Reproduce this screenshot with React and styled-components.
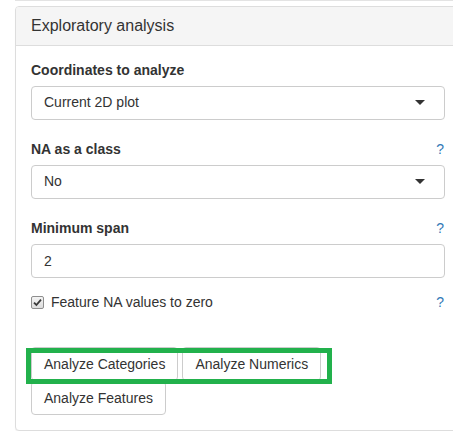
import { styled, createGlobalStyle } from "styled-components";

const GlobalStyle = createGlobalStyle`
  html, body {
    margin: 0;
    padding: 0;
    background: #fff;
    overflow: hidden;
  }
  body {
    font-family: "Liberation Sans", Arial, sans-serif;
    font-size: 14px;
    line-height: 1.42857;
    color: #333;
  }
  * { box-sizing: border-box; }
`;

const fields = [
  { label: "Coordinates to analyze", kind: "select", value: "Current 2D plot", help: false },
  { label: "NA as a class", kind: "select", value: "No", help: true },
  { label: "Minimum span", kind: "input", value: "2", help: true },
];

export default function App() {
  return (
    <>
      <GlobalStyle />
      <PrevPanelEdge />
      <Panel>
        <PanelHeading>Exploratory analysis</PanelHeading>
        <PanelBody>
          {fields.map((f) => (
            <FormGroup key={f.label}>
              <LabelRow>
                <Label>{f.label}</Label>
                {f.help && <Help>?</Help>}
              </LabelRow>
              {f.kind === "select" ? (
                <SelectBox>
                  <span>{f.value}</span>
                  <Caret />
                </SelectBox>
              ) : (
                <TextInput defaultValue={f.value} />
              )}
            </FormGroup>
          ))}

          <CheckRow>
            <CheckLabel>
              <CheckBox>
                <svg width="9" height="9" viewBox="0 0 9 9">
                  <path d="M1 4.6 L3.4 7 L8 1.6" fill="none" stroke="#3a3a3a" strokeWidth="1.8" />
                </svg>
              </CheckBox>
              Feature NA values to zero
            </CheckLabel>
            <Help>?</Help>
          </CheckRow>

          <ButtonArea>
            <Button>Analyze Categories</Button>
            <Button>Analyze Numerics</Button>
            <Button>Analyze Features</Button>
            <Highlight />
          </ButtonArea>
        </PanelBody>
      </Panel>
    </>
  );
}

const PrevPanelEdge = styled.div`
  height: 1px;
  margin: 0 0 5px 15px;
  border-bottom: 1px solid #e3e3e3;
`;

const Panel = styled.div`
  margin-left: 15px;
  width: 446px;
  border: 1px solid #ddd;
  border-radius: 4px;
  background: #fff;
  box-shadow: 0 1px 1px rgba(0, 0, 0, 0.05);
`;

const PanelHeading = styled.div`
  padding: 10px 15px;
  background: #f5f5f5;
  border-bottom: 1px solid #ddd;
  border-radius: 3px 3px 0 0;
  font-size: 16px;
  line-height: 1.1;
  color: #333;
`;

const PanelBody = styled.div`
  padding: 15px;
`;

const FormGroup = styled.div`
  margin-bottom: 20px;
`;

const LabelRow = styled.div`
  display: flex;
  justify-content: space-between;
  align-items: center;
  margin-bottom: 5px;
  height: 20px;
`;

const Label = styled.label`
  font-weight: bold;
`;

const Help = styled.span`
  color: #337ab7;
  font-size: 14px;
  padding-right: 1px;
`;

const SelectBox = styled.div`
  display: flex;
  align-items: center;
  justify-content: space-between;
  height: 34px;
  padding: 6px 19px 6px 12px;
  border: 1px solid #ccc;
  border-radius: 4px;
  background: #fff;
  color: #333;
`;

const Caret = styled.span`
  width: 0;
  height: 0;
  border-left: 5px solid transparent;
  border-right: 5px solid transparent;
  border-top: 5px solid #333;
`;

const TextInput = styled.input`
  display: block;
  width: 100%;
  height: 34px;
  padding: 6px 12px;
  border: 1px solid #ccc;
  border-radius: 4px;
  font: inherit;
  color: #333;
  outline: none;
`;

const CheckRow = styled.div`
  display: flex;
  justify-content: space-between;
  align-items: center;
  height: 20px;
  margin-top: -5px;
`;

const CheckLabel = styled.label`
  display: flex;
  align-items: center;
  font-weight: normal;
`;

const CheckBox = styled.span`
  display: inline-flex;
  align-items: center;
  justify-content: center;
  width: 13px;
  height: 13px;
  margin-right: 7px;
  border: 1px solid #8e8e8e;
  border-radius: 2px;
  background: linear-gradient(#f4f4f4, #dcdcdc);
`;

const ButtonArea = styled.div`
  position: relative;
  display: flex;
  flex-wrap: wrap;
  column-gap: 4px;
  margin-top: 34px;
`;

const Button = styled.button`
  height: 34px;
  padding: 6px 12px;
  border: 1px solid #ccc;
  border-radius: 4px;
  background: #fff;
  color: #333;
  font: inherit;
  line-height: 20px;
  cursor: pointer;
`;

/* green marker drawn round the first row of buttons */
const Highlight = styled.div`
  position: absolute;
  left: -5px;
  top: 1px;
  width: 306px;
  height: 36px;
  border: 5px solid #22b14c;
  pointer-events: none;
`;
